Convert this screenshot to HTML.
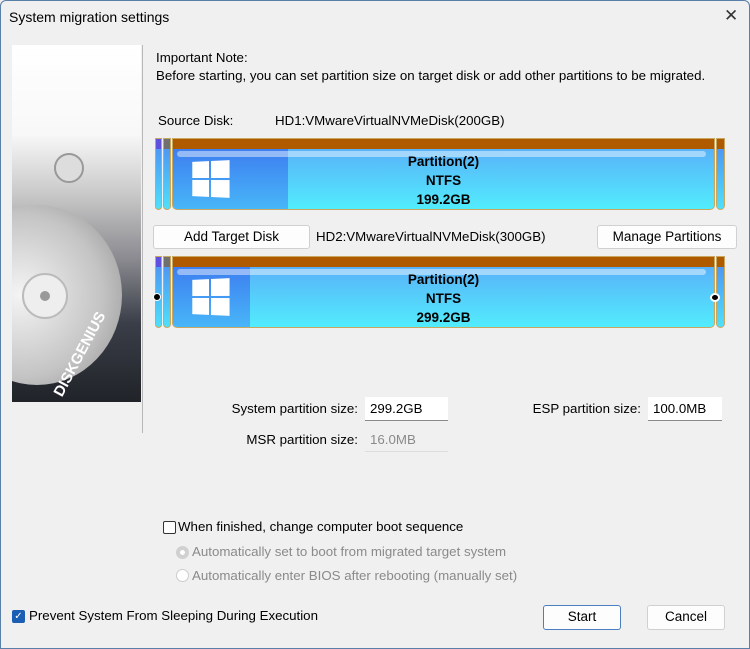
<!DOCTYPE html>
<html><head><meta charset="utf-8"><style>
*{box-sizing:border-box;margin:0;padding:0}
body{width:750px;height:649px;background:#f0f0f0;font-family:"Liberation Sans",sans-serif;font-size:13.3px;color:#000;position:relative;overflow:hidden}
.win{position:absolute;left:0;top:0;width:750px;height:649px;border:1px solid #5a7fa8;border-radius:6px 6px 0 0}
.a{position:absolute;white-space:nowrap}
.btn{position:absolute;background:#fdfdfd;border:1px solid #d0d0d0;border-radius:3px;text-align:center;line-height:22px;font-size:13.5px}
.inp{position:absolute;background:#fff;border-bottom:1px solid #8a8a8a;height:24px;padding-left:5px;line-height:24px}
.disk{position:absolute;left:155px;width:570px;height:72px}
.seg{position:absolute;top:0;height:100%;border:1px solid #c8a860;border-radius:0 0 5px 5px;overflow:hidden;background:linear-gradient(#4e8cf2,#4fe0fb)}
.seg .top{position:absolute;left:0;right:0;top:0;height:10px;background:#b05a00}
.main{background:linear-gradient(#5aa8f8,#52ecfd)}
.dark{position:absolute;left:0;top:10px;bottom:0;background:linear-gradient(#3d7ef0,#48b6f8)}
.hl{position:absolute;left:4px;right:8px;top:12px;height:6px;background:rgba(255,255,255,.45);border-radius:3px}
.txt{position:absolute;left:0;right:0;top:13px;text-align:center;font-weight:bold;font-size:13.5px;line-height:19px}
.logo{position:absolute;left:18px;top:22px;width:38px;height:36px;display:grid;grid-template-columns:1fr 1fr;gap:2px;transform:perspective(80px) rotateY(-12deg)}
.logo i{background:#fff}
.cb{position:absolute;width:13px;height:13px;border:1px solid #333;border-radius:2px;background:#fff}
.rd{position:absolute;width:13px;height:13px;border:1px solid #ccc;border-radius:50%;background:#fff}
.gr{color:#8a8a8a}
</style></head><body>
<div class="win"></div>
<div class="a" style="left:9px;top:9px;font-size:14px">System migration settings</div>
<div class="a" style="left:724px;top:6px;font-size:17px;color:#333">✕</div>

<div style="position:absolute;left:12px;top:45px;width:129px;height:357px;background:linear-gradient(#fff 0%,#f8f8f8 25%,#c8c8c8 42%,#8a8a90 60%,#3a3e48 78%,#202328 100%);overflow:hidden">
 <div style="position:absolute;left:-60px;top:160px;width:170px;height:180px;border-radius:50%;background:radial-gradient(circle at 40% 50%,#f4f4f4,#c4c4c4 60%,#8c8c8c)"></div>
 <div style="position:absolute;left:10px;top:228px;width:46px;height:46px;border-radius:50%;background:#eee;border:2px solid #bbb"></div>
 <div style="position:absolute;left:28px;top:246px;width:10px;height:10px;border-radius:50%;background:#999"></div>
 <div style="position:absolute;left:42px;top:108px;width:30px;height:30px;border-radius:50%;background:#ddd;border:2px solid #999"></div>
 <div style="position:absolute;left:46px;top:342px;color:#fff;font-weight:bold;font-size:15px;transform:rotate(-62deg);transform-origin:left;letter-spacing:0">DISKGENIUS</div>
</div>
<div style="position:absolute;left:142px;top:45px;width:1px;height:388px;background:#b8b8b8"></div>

<div class="a" style="left:156px;top:50px">Important Note:</div>
<div class="a" style="left:156px;top:68px">Before starting, you can set partition size on target disk or add other partitions to be migrated.</div>
<div class="a" style="left:158px;top:113px">Source Disk:</div>
<div class="a" style="left:275px;top:113px">HD1:VMwareVirtualNVMeDisk(200GB)</div>

<div class="disk" style="top:138px">
 <div class="seg" style="left:0;width:7px"><div class="top" style="background:#6050e0"></div></div>
 <div class="seg" style="left:8px;width:8px"><div class="top" style="background:#707070"></div></div>
 <div class="seg main" style="left:17px;width:543px"><div class="top"></div><div class="dark" style="width:115px"></div><div class="hl"></div><div class="logo"><i></i><i></i><i></i><i></i></div>
  <div class="txt">Partition(2)<br>NTFS<br>199.2GB</div></div>
 <div class="seg" style="left:561px;width:9px"><div class="top"></div></div>
</div>

<div class="btn" style="left:153px;top:225px;width:157px;height:24px">Add Target Disk</div>
<div class="a" style="left:316px;top:229px">HD2:VMwareVirtualNVMeDisk(300GB)</div>
<div class="btn" style="left:597px;top:225px;width:140px;height:24px">Manage Partitions</div>

<div class="disk" style="top:256px">
 <div class="seg" style="left:0;width:7px"><div class="top" style="background:#6050e0"></div></div>
 <div class="seg" style="left:8px;width:8px"><div class="top" style="background:#707070"></div></div>
 <div class="seg main" style="left:17px;width:543px"><div class="top"></div><div class="dark" style="width:77px"></div><div class="hl"></div><div class="logo"><i></i><i></i><i></i><i></i></div>
  <div class="txt">Partition(2)<br>NTFS<br>299.2GB</div></div>
 <div class="seg" style="left:561px;width:9px"><div class="top"></div></div>
 <div style="position:absolute;left:-2px;top:37px;width:8px;height:8px;border-radius:50%;background:#000;border:1px solid #fff"></div>
 <div style="position:absolute;left:555px;top:37px;width:10px;height:9px;border-radius:50%;background:#000;border:2px solid #fff"></div>
</div>

<div class="a" style="right:392px;top:401px">System partition size:</div>
<div class="inp" style="left:365px;top:397px;width:83px">299.2GB</div>
<div class="a" style="right:109px;top:401px">ESP partition size:</div>
<div class="inp" style="left:648px;top:397px;width:74px">100.0MB</div>
<div class="a" style="right:392px;top:432px">MSR partition size:</div>
<div class="inp gr" style="left:365px;top:428px;width:83px;border-bottom-color:#ddd;background:#f0f0f0">16.0MB</div>

<div class="cb" style="left:163px;top:521px"></div>
<div class="a" style="left:178px;top:519px">When finished, change computer boot sequence</div>
<div class="rd" style="left:176px;top:546px;border:4px solid #d0d0d0"></div>
<div class="a gr" style="left:192px;top:544px">Automatically set to boot from migrated target system</div>
<div class="rd" style="left:176px;top:569px"></div>
<div class="a gr" style="left:192px;top:568px">Automatically enter BIOS after rebooting (manually set)</div>

<div class="cb" style="left:12px;top:610px;background:#1a5fb4;border-color:#1a5fb4;color:#fff;font-size:10px;line-height:11px;text-align:center">✓</div>
<div class="a" style="left:29px;top:608px">Prevent System From Sleeping During Execution</div>
<div class="btn" style="left:543px;top:605px;width:78px;height:25px;border-color:#4a7fc0">Start</div>
<div class="btn" style="left:647px;top:605px;width:78px;height:25px">Cancel</div>
</body></html>
